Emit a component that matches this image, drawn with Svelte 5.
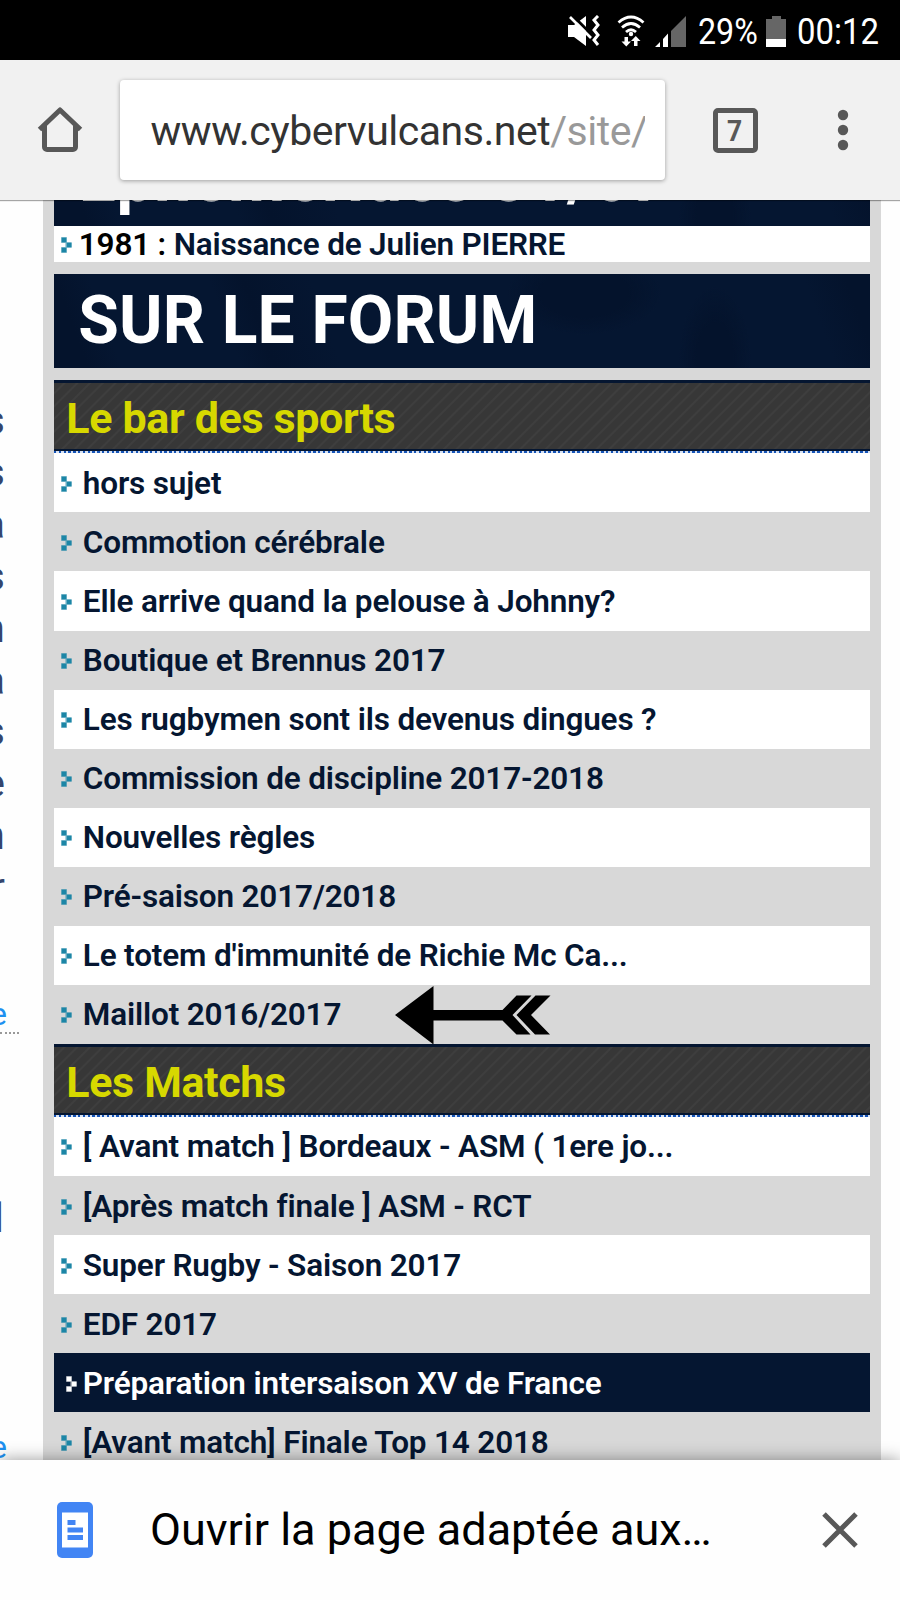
<script>
  const url = { host: "www.cybervulcans.net", path: "/site/" };

  const forums = [
    {
      title: "Le bar des sports",
      topics: [
        "hors sujet",
        "Commotion cérébrale",
        "Elle arrive quand la pelouse à Johnny?",
        "Boutique et Brennus 2017",
        "Les rugbymen sont ils devenus dingues ?",
        "Commission de discipline 2017-2018",
        "Nouvelles règles",
        "Pré-saison 2017/2018",
        "Le totem d'immunité de Richie Mc Ca...",
        "Maillot 2016/2017",
      ],
    },
    {
      title: "Les Matchs",
      topics: [
        "[ Avant match ] Bordeaux - ASM ( 1ere jo...",
        "[Après match finale ] ASM - RCT",
        "Super Rugby - Saison 2017",
        "EDF 2017",
        "Préparation intersaison XV de France",
        "[Avant match] Finale Top 14 2018",
      ],
    },
  ];

  const active = "Préparation intersaison XV de France";
  const marked = "Maillot 2016/2017";

  // line endings of the article in the neighbouring column
  const endings = ["s", "s", "a", "s", "n", "a", "s", "e", "n", "r"];
</script>

{#snippet bullet()}
  <svg class="bullet" width="11" height="16" viewBox="0 0 11 16">
    <path d="M0 0h6v5.500h5v5h-5v5.500h-6v-6h4v-4h-4z" fill="currentColor" opacity="0.35" />
    <path d="M0.500 0.500h5v5h-5zM5.500 5.500h5v5h-5zM0.500 10.500h5v5h-5z" fill="currentColor" />
  </svg>
{/snippet}

<div class="phone">
  <div class="status">
    <svg class="mute" width="34" height="32" viewBox="0 0 34 32">
      <path d="M1 10h6l12-9v30l-12-9h-6z" fill="#fff" />
      <path d="M5 0l24 24" stroke="#000" stroke-width="3" />
      <path d="M3 2l21 21" stroke="#fff" stroke-width="2.6" />
      <path d="M31 1l-4 4 4 5-4 5 4 5-4 5 4 5" fill="none" stroke="#fff" stroke-width="3" />
    </svg>
    <svg class="wifi" width="28" height="32" viewBox="0 0 28 32">
      <g fill="none" stroke="#fff" stroke-width="2.8">
        <path d="M1.500 7.500q12.500-11 25 0" />
        <path d="M5 12.500q9-8 18 0" />
        <path d="M9 17q5-4.500 10 0" />
      </g>
      <circle cx="14" cy="19" r="2.200" fill="#fff" />
      <path d="M7.500 22h3.500v4.500h3l-4.700 5-4.800-5h3zM17 31h3.500v-5h3l-4.700-5-4.800 5h3z" fill="#fff" />
    </svg>
    <svg class="signal" width="31" height="31" viewBox="0 0 31 31">
      <path d="M16 15l15-15v31h-15z" fill="#666" />
      <path d="M0 31l5-5v5zM8 23l5-5.500v13.500h-5z" fill="#fff" />
    </svg>
    <span class="percent">29%</span>
    <svg class="battery" width="20" height="31" viewBox="0 0 20 31">
      <path d="M6 0h9v3h5v20h-20v-20h6z" fill="#666" />
      <path d="M0 23h20v8h-20z" fill="#fff" />
    </svg>
    <span class="clock">00:12</span>
  </div>

  <div class="toolbar">
    <svg class="home" width="46" height="46" viewBox="0 0 46 46">
      <path
        d="M2.500 22.500L23 3l20.500 19.500M7.500 18v22a2.500 2.500 0 0 0 2.500 2.500h26a2.500 2.500 0 0 0 2.500-2.500v-22"
        fill="none"
        stroke="#585858"
        stroke-width="5"
        stroke-linejoin="round"
      />
    </svg>
    <div class="address">
      <div class="url">{url.host}<span>{url.path}</span></div>
    </div>
    <div class="tabs"><span>7</span></div>
    <svg class="menu" width="12" height="42" viewBox="0 0 12 42">
      <g fill="#585858">
        <circle cx="6" cy="6" r="5.200" />
        <circle cx="6" cy="21" r="5.200" />
        <circle cx="6" cy="36" r="5.200" />
      </g>
    </svg>
  </div>

  <div class="page">
    <div class="article">
      <div class="text">
        {#each endings as letter}
          <div>{letter}</div>
        {/each}
      </div>
      <div class="more">e</div>
      <div class="dots"></div>
      <div class="text last"><div>l</div></div>
      <div class="more">e</div>
    </div>

    <div class="column">
      <h2>Éphémérides 31/07</h2>
      <div class="birth">
        {@render bullet()}
        <p>1981 : <b>Naissance de Julien PIERRE</b></p>
      </div>
      <h2 class="forum">SUR LE FORUM</h2>

      {#each forums as forum}
        <h3>{forum.title}</h3>
        <ul>
          {#each forum.topics as topic}
            <li class:active={topic == active}>
              {@render bullet()}
              <span>{topic}</span>
              {#if topic == marked}
                <svg class="arrow" width="156" height="58" viewBox="0 0 156 58">
                  <path d="M0 29L38.500 0v24h69l14-14.500h15l-19 19.500 18 19.500h-14l-14-14h-69v24z" />
                  <path d="M155.500 9.500h-15l-19 19.500 18.500 19.500h15l-19-19.500z" />
                </svg>
              {/if}
            </li>
          {/each}
        </ul>
      {/each}
    </div>
  </div>

  <div class="sheet">
    <svg class="reader" width="36" height="56" viewBox="0 0 36 56">
      <rect width="36" height="56" rx="5" fill="#4285f4" />
      <path d="M5 10.500h26v35h-26z" fill="#fff" />
      <path d="M10.500 18h8v5h-8zM10.500 25.500h15.500v5h-15.500zM10.500 33h15.500v5h-15.500z" fill="#4285f4" />
    </svg>
    <p>Ouvrir la page adaptée aux…</p>
    <svg class="close" width="36" height="36" viewBox="0 0 36 36">
      <path d="M2 2l32 32M34 2l-32 32" stroke="#585858" stroke-width="5" />
    </svg>
  </div>
</div>

<style>
  :global(body) {
    margin: 0;
    background: #fff;
  }

  .phone {
    width: 900px;
    height: 1600px;
    display: flex;
    flex-direction: column;
    overflow: hidden;
    font-family: Roboto, "Liberation Sans", sans-serif;
    background: #fefefe;
  }

  h2,
  h3,
  p,
  ul {
    margin: 0;
    padding: 0;
  }

  svg {
    display: block;
    flex: none;
  }

  .status {
    height: 60px;
    flex: none;
    box-sizing: border-box;
    padding: 2px 0 0 567px;
    display: flex;
    align-items: center;
    background: #000;
    color: #fff;
    font-size: 37px;
    white-space: nowrap;
  }

  .wifi {
    margin-left: 16px;
  }

  .signal {
    margin-left: 10px;
  }

  .percent {
    width: 69px;
    margin: 1px -1px 0 12px;
    transform: scaleX(0.87);
    transform-origin: left;
  }

  .clock {
    margin: 1px 0 0 11px;
    transform: scaleX(0.89);
    transform-origin: left;
  }

  .toolbar {
    height: 140px;
    flex: none;
    box-sizing: border-box;
    padding-left: 37px;
    display: flex;
    align-items: center;
    background: #f1f1f1;
    box-shadow: 0 1px 1px rgba(0, 0, 0, 0.35);
    z-index: 1;
  }

  .address {
    width: 545px;
    height: 100px;
    box-sizing: border-box;
    margin-left: 37px;
    padding: 0 20px 0 30.500px;
    border-radius: 4px;
    background: #fff;
    box-shadow: 0 1px 4px rgba(0, 0, 0, 0.35);
  }

  .url {
    height: 100px;
    overflow: hidden;
    white-space: nowrap;
    font-size: 41px;
    letter-spacing: -0.480px;
    line-height: 102px;
    color: #333;
  }

  .url span {
    color: #999;
  }

  .tabs {
    width: 45px;
    height: 45px;
    box-sizing: border-box;
    margin-left: 47.500px;
    border: 5px solid #585858;
    border-radius: 5px;
    color: #585858;
    font-size: 30px;
    font-weight: 700;
    line-height: 36px;
    text-align: center;
  }

  .tabs span {
    display: inline-block;
    transform: scaleX(0.88);
  }

  .menu {
    margin-left: 79px;
  }

  .page {
    flex: 1;
    min-height: 0;
    display: flex;
    overflow: hidden;
  }

  .article {
    width: 43px;
    flex: none;
    padding-top: 195px;
    box-sizing: border-box;
  }

  .text,
  .more {
    width: 5px;
    display: flex;
    flex-direction: column;
    align-items: flex-end;
    overflow: hidden;
    font-size: 41px;
    line-height: 51.900px;
    color: #34456e;
  }

  .more {
    width: 7px;
    margin-top: 83px;
    font-size: 32px;
    line-height: 35px;
    color: #1e90f0;
  }

  .dots {
    width: 19px;
    border-bottom: 2px dotted #999;
  }

  .last {
    width: 4px;
    margin-top: 159px;
  }

  .last + .more {
    margin-top: 185px;
  }

  .column {
    width: 838px;
    box-sizing: border-box;
    padding: 0 11.300px;
    background: #d8d8d8;
  }

  h2 {
    height: 94.300px;
    box-sizing: border-box;
    margin-top: -68px;
    padding-left: 24.500px;
    background-color: #051631;
    background-image:
      radial-gradient(ellipse 60px 120px at 81% 90%, #04132c 30%, transparent 60%),
      radial-gradient(ellipse 110px 60px at 65% 20%, #04132c 40%, transparent 70%),
      linear-gradient(70deg, #04132c 0 4%, transparent 8% 22%, #04132c 26%, transparent 34% 92%, #04132c 97%);
    color: #fff;
    font-size: 66px;
    letter-spacing: 0.600px;
    line-height: 94.300px;
  }

  h2.forum {
    margin: 12px 0 11.700px;
    padding-left: 24px;
    letter-spacing: 0.150px;
  }

  .birth {
    height: 35.700px;
    display: flex;
    align-items: center;
    background: #fff;
    font-size: 31.500px;
    font-weight: 600;
    letter-spacing: -0.200px;
    color: #000;
  }

  .birth p {
    margin-left: 6.500px;
  }

  .birth b {
    color: #051631;
    font-weight: 600;
  }

  .bullet {
    margin: 1.500px 0 0 7px;
    color: #1c86a6;
  }

  h3 {
    height: 73.400px;
    box-sizing: border-box;
    padding-left: 12px;
    border-top: 3px solid #051631;
    background-image:
      repeating-linear-gradient(90deg, #1554b8 0 2.400px, #d8e2f2 2.400px 4.800px),
      linear-gradient(#051631, #051631),
      repeating-linear-gradient(135deg, #373737 0 6px, #3e3e3e 7px 8px, #373737 9px);
    background-position:
      0 100%,
      0 100%,
      0 0;
    background-size:
      100% 2px,
      100% 4px,
      auto;
    background-repeat: no-repeat;
    color: #d7d800;
    font-size: 43px;
    letter-spacing: -0.350px;
    line-height: 70px;
  }

  ul {
    list-style: none;
  }

  li {
    height: 59.060px;
    display: flex;
    align-items: center;
    color: #051631;
    font-size: 31.500px;
    font-weight: 600;
    letter-spacing: -0.160px;
    white-space: nowrap;
  }

  li:nth-child(odd) {
    background: #fff;
  }

  li span {
    margin: 0.500px 0 0 10.500px;
  }

  li.active {
    background: #051631;
    color: #fff;
  }

  .active .bullet {
    margin: 1.500px -5px 0 12px;
    color: #fff;
  }

  .arrow {
    margin: 2px 0 0 54px;
  }

  .sheet {
    height: 140px;
    flex: none;
    box-sizing: border-box;
    padding-left: 57px;
    display: flex;
    align-items: center;
    background: #fefefe;
    box-shadow: 0 0 16px rgba(0, 0, 0, 0.4);
    z-index: 1;
  }

  .sheet p {
    width: 672px;
    margin: -1px 0 0 57px;
    font-size: 45px;
    color: #000;
  }
</style>
